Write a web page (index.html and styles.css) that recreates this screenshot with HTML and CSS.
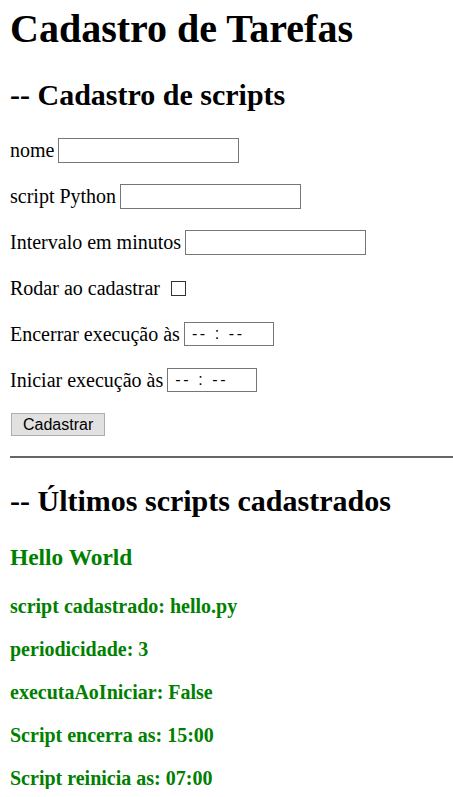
FILE: index.html
```html
<!DOCTYPE html>
<html lang="pt">
<head>
<meta charset="utf-8">
<title>Cadastro de Tarefas</title>
<link rel="stylesheet" href="styles.css">
</head>
<body class="page">
<h1 class="title">Cadastro de Tarefas</h1>
<h2 class="section">-- Cadastro de scripts</h2>
<form class="form">
  <p class="row"><label>nome</label> <input class="field" type="text"></p>
  <p class="row"><label>script Python</label> <input class="field" type="text"></p>
  <p class="row"><label>Intervalo em minutos</label> <input class="field" type="text"></p>
  <p class="row"><label>Rodar ao cadastrar</label> <span class="check"></span></p>
  <p class="row"><label>Encerrar execução às</label> <span class="time">-- : --</span></p>
  <p class="row"><label>Iniciar execução às</label> <span class="time">-- : --</span></p>
  <p class="row"><button class="btn" type="button">Cadastrar</button></p>
</form>
<hr class="rule">
<h2 class="section section-list">-- Últimos scripts cadastrados</h2>
<div class="item">
  <h3 class="item-title">Hello World</h3>
  <h4 class="item-line">script cadastrado: hello.py</h4>
  <h4 class="item-line">periodicidade: 3</h4>
  <h4 class="item-line">executaAoIniciar: False</h4>
  <h4 class="item-line">Script encerra as: 15:00</h4>
  <h4 class="item-line">Script reinicia as: 07:00</h4>
</div>
</body>
</html>
```

FILE: styles.css
```css
html, body { background: #fff; }
.page {
  margin: 8px 0 8px 10px;
  font-family: "Liberation Serif", "Times New Roman", serif;
  font-size: 20px;
  color: #000;
  overflow: hidden;
}
.title {
  font-size: 40px;
  font-weight: bold;
  margin: 0;
  line-height: 42px;
}
.section {
  font-size: 30px;
  font-weight: bold;
  margin: 29px 0 26px;
  line-height: 32px;
}
.form { margin: 0; }
.row {
  margin: 0 0 20px;
  font-size: 20px;
  line-height: 26px;
  display: flex;
  align-items: center;
  gap: 4px;
}
.field {
  width: 177px;
  height: 21px;
  border: 1px solid #767676;
  padding: 1px 1px;
  margin: 0;
  font-family: "Liberation Sans", Arial, sans-serif;
  font-size: 15px;
  box-sizing: content-box;
}
.check {
  display: inline-block;
  width: 15px;
  height: 15px;
  border: 1px solid #333;
  margin-left: 7px;
  box-sizing: border-box;
}
.time {
  display: inline-block;
  width: 90px;
  height: 24px;
  border: 1px solid #767676;
  box-sizing: border-box;
  font-family: "Liberation Sans", Arial, sans-serif;
  font-size: 16px;
  letter-spacing: 2.6px;
  line-height: 22px;
  padding-left: 7px;
  white-space: pre;
}
.btn {
  font-family: "Liberation Sans", Arial, sans-serif;
  font-size: 16px;
  background: #e1e1e1;
  border: 1px solid #adadad;
  padding: 0 11px;
  height: 23px;
  line-height: 20px;
  margin: 0 0 0 1px;
}
.rule {
  border: none;
  border-top: 2px solid #666;
  margin: 19px 0 0 0;
}
.section-list { margin: 27px 0 0; }
.item { color: #008000; }
.item-title {
  font-size: 23.4px;
  margin: 23px 0 0;
  line-height: 34px;
}
.item-line {
  font-size: 20px;
  margin: 22px 0 0;
  line-height: 21px;
}
```
